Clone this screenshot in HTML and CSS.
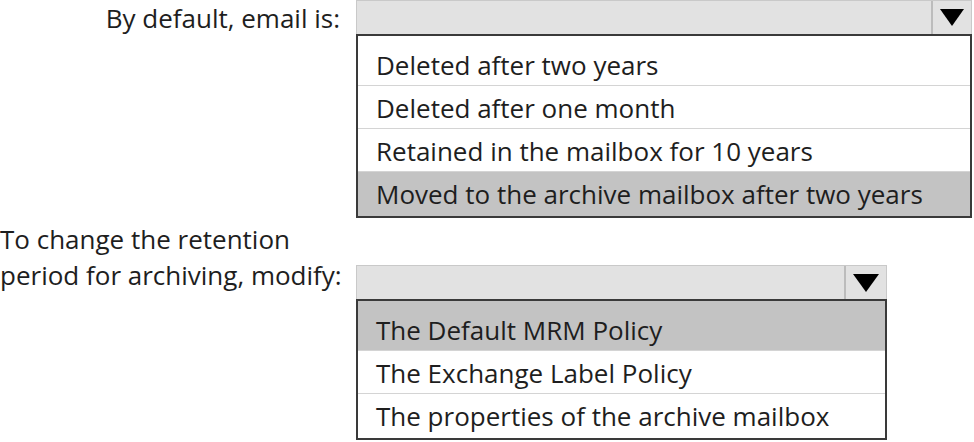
FILE: index.html
```html
<!DOCTYPE html>
<html lang="en">
<head>
    <meta charset="UTF-8">
    <meta name="viewport" content="width=device-width, initial-scale=1.0">
    <title>Retention settings</title>
    <link rel="stylesheet" href="styles.css">
</head>
<body>
    <div class="form">
        <div class="question q1">
            <div class="label">By default, email is:</div>
            <div class="control wide">
                <div class="select">
                    <span class="arrow">
                        <svg width="24" height="17" viewBox="0 0 24 17"><polygon points="0,0 24,0 12,17" fill="#000"/></svg>
                    </span>
                </div>
                <ul class="options">
                    <li>Deleted after two years</li>
                    <li>Deleted after one month</li>
                    <li>Retained in the mailbox for 10 years</li>
                    <li class="selected">Moved to the archive mailbox after two years</li>
                </ul>
            </div>
        </div>
        <div class="question q2">
            <div class="label left">To change the retention<br>period for archiving, modify:</div>
            <div class="control narrow">
                <div class="select">
                    <span class="arrow">
                        <svg width="26" height="18" viewBox="0 0 26 18"><polygon points="0,0 26,0 13,18" fill="#000"/></svg>
                    </span>
                </div>
                <ul class="options">
                    <li class="selected">The Default MRM Policy</li>
                    <li>The Exchange Label Policy</li>
                    <li>The properties of the archive mailbox</li>
                </ul>
            </div>
        </div>
    </div>
</body>
</html>
```

FILE: styles.css
```css
*{
    padding: 0;
    margin: 0;
    box-sizing: border-box;
    font-family: 'Open Sans', 'Noto Sans', sans-serif;
}
body{
    background-color: #fff;
    color: #1e1e1e;
    font-size: 26px;
}
.question{
    display: flex;
    gap: 16px;
}
.label{
    width: 340px;
    text-align: right;
    white-space: nowrap;
    line-height: 36px;
}
.label.left{
    text-align: left;
}
.q2{
    margin-top: 3px;
}
.q2 .control{
    margin-top: 44px;
}
.wide{
    width: 616px;
}
.narrow{
    width: 531px;
}
.select{
    height: 34px;
    background-color: #e2e2e2;
    border: 1px solid #c9c9c9;
    border-bottom: 0;
    display: flex;
    justify-content: flex-end;
}
.arrow{
    width: 40px;
    border-left: 2px solid #bcbcbc;
    display: flex;
    align-items: center;
    justify-content: center;
}
.narrow .arrow{
    width: 42px;
}
.options{
    list-style: none;
    border: 2px solid #3a3a3a;
    background-color: #fff;
}
.options li{
    height: 43px;
    line-height: 44px;
    padding-left: 18px;
    white-space: nowrap;
    border-bottom: 1px solid #d4d4d4;
}
.options li:first-child{
    height: 50px;
    padding-top: 7px;
}
.options li:last-child{
    border-bottom: 0;
    height: 44px;
}
.options li.selected{
    background-color: #c3c3c3;
}
```
